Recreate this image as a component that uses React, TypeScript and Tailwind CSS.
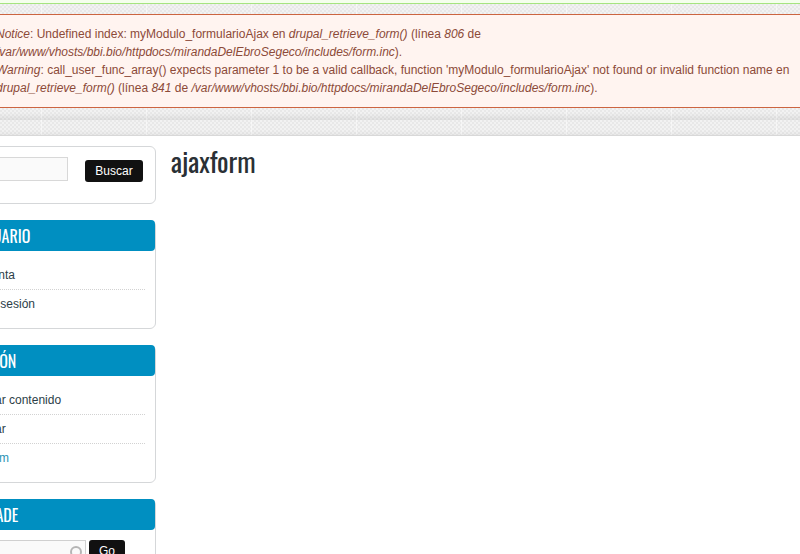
import type { ReactNode } from "react";

const heading = "font-['Oswald','Liberation_Sans_Narrow','Roboto_Condensed',Roboto,sans-serif]";

const texture =
  "bg-[#efefef] bg-[image:repeating-linear-gradient(90deg,transparent_0_41px,#ffffff80_41px_42px,transparent_42px_105px),repeating-conic-gradient(#e8e8e8_0_25%,#f2f2f2_0_50%)] bg-[size:auto,4px_4px]";

function Block({ title, children }: { title: string; children: ReactNode }) {
  return (
    <section className="rounded-md border border-[#d5d7d9] bg-white">
      <h2
        className={`${heading} -mt-px -ml-px h-[31px] rounded bg-[#008fc1] pl-3.5 text-base leading-8 text-white uppercase`}
      >
        {title}
      </h2>
      {children}
    </section>
  );
}

function Menu({ items, active }: { items: string[]; active?: string }) {
  return (
    <ul className="pt-2.5 pr-2.5 pb-2.5 pl-[18px]">
      {items.map((item) => (
        <li
          key={item}
          className="border-b border-dotted border-[#d2d2d2] py-1.5 leading-4 last:border-b-0"
        >
          <a href="#" className={item === active ? "text-[#2a94b5]" : "text-[#2c3e48]"}>
            {item}
          </a>
        </li>
      ))}
    </ul>
  );
}

export default function App() {
  return (
    <div className="min-h-screen overflow-hidden bg-white font-['Liberation_Sans',Arial,sans-serif] text-xs text-[#2c3338]">
      <header className={texture}>
        <div className="h-1 border-b border-[#a5e47f] bg-[#f4ffec]" />
        <ul className="-ml-1 mt-2.5 border-y border-[#cc6440] bg-[#fff4f0] py-2.5 leading-[18px] whitespace-nowrap text-[#8c4a38]">
          <li>
            <em>Notice</em>: Undefined index: myModulo_formularioAjax en <em>drupal_retrieve_form()</em> (línea{" "}
            <em>806</em> de
            <br />
            <em>/var/www/vhosts/bbi.bio/httpdocs/mirandaDelEbroSegeco/includes/form.inc</em>).
          </li>
          <li>
            <em>Warning</em>: call_user_func_array() expects parameter 1 to be a valid callback, function
            'myModulo_formularioAjax' not found or invalid function name en
            <br />
            <em>drupal_retrieve_form()</em> (línea <em>841</em> de{" "}
            <em>/var/www/vhosts/bbi.bio/httpdocs/mirandaDelEbroSegeco/includes/form.inc</em>).
          </li>
        </ul>
        <div className="h-3 bg-linear-to-b from-transparent from-40% to-black/7" />
        <div className="h-4 border-b border-[#d8d8d8] bg-linear-to-b from-transparent from-70% to-black/4" />
      </header>

      <div className="-ml-14 flex gap-[15px] pt-2.5">
        <aside className="flex w-[212px] shrink-0 flex-col gap-4">
          <form className="flex h-[58px] items-start rounded-md border border-[#d5d7d9] pt-2.5 pr-3 pl-[18px]">
            <input
              type="text"
              aria-label="Buscar"
              className="h-6 min-w-0 flex-1 border border-[#d8d8d8] bg-[#fafafa] px-2"
            />
            <button
              type="button"
              className="mt-[3px] ml-[17px] h-[22px] w-[58px] rounded-[3px] bg-[#111111] text-white"
            >
              Buscar
            </button>
          </form>

          <Block title="De usuario">
            <Menu items={["Mi cuenta", "Cerrar sesión"]} />
          </Block>
          <Block title="Relación">
            <Menu items={["Agregar contenido", "Agregar", "ajaxform"]} active="ajaxform" />
          </Block>
          <Block title="Novidade">
            <form className="flex gap-[3px] pt-2.5 pr-[30px] pb-4 pl-[18px]">
              <div className="relative min-w-0 flex-1">
                <input
                  type="text"
                  aria-label="Search"
                  className="h-6 w-full border border-[#d0d0d0] bg-[#fafafa] pr-5 pl-2"
                />
                <svg
                  viewBox="0 0 14 16"
                  className="absolute top-1.5 right-0.5 h-4 w-3.5"
                  fill="none"
                  stroke="#b5b5b5"
                  strokeWidth="2"
                >
                  <circle cx="6" cy="6" r="5" />
                  <path d="M9.5 9.5 L13 13" />
                </svg>
              </div>
              <button type="button" className="h-[22px] rounded-[3px] bg-[#111111] px-2.5 text-white">
                Go
              </button>
            </form>
          </Block>
        </aside>

        <main className="flex-1">
          <h1 className={`${heading} text-[27px] leading-[30px] text-[#2a3035]`}>ajaxform</h1>
        </main>
      </div>
    </div>
  );
}
